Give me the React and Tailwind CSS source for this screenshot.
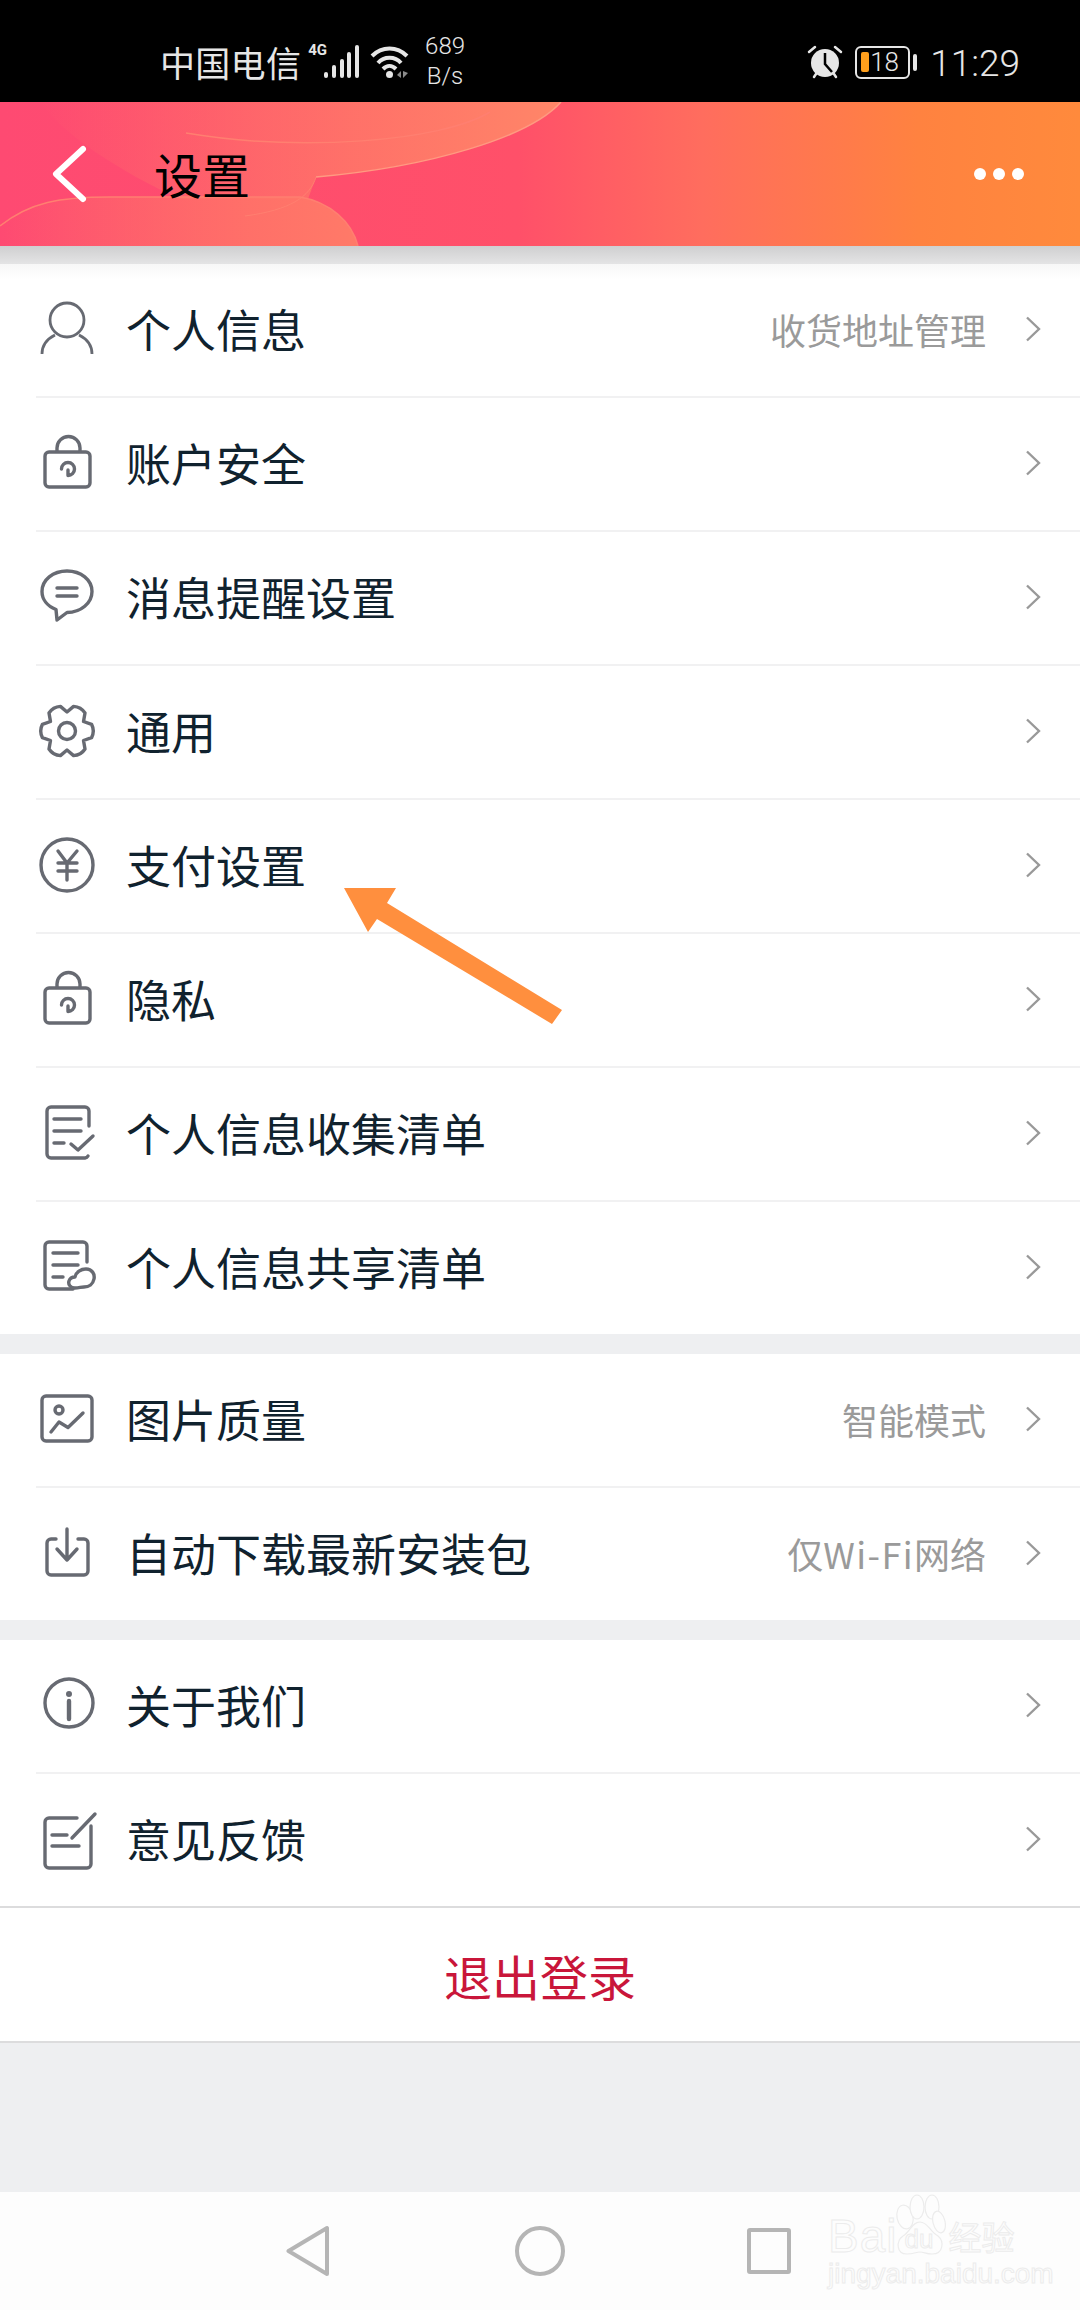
import { Fragment } from "react";

const cjk = { fontFamily: '"Noto Sans CJK SC", "Noto Sans", sans-serif' };

// six lobes, notch on top like the reference gear
const gearPath = (() => {
  let d = "";
  for (let k = 0; k < 6; k++) {
    const a = (k * Math.PI) / 3;
    const pt = (r, off) => {
      const t = a + (off * Math.PI) / 180;
      return `${(31 + r * Math.cos(t)).toFixed(1)} ${(31 + r * Math.sin(t)).toFixed(1)}`;
    };
    d += `${k === 0 ? "M" : "L"}${pt(19, -30)} L${pt(25.5, -15)} Q${pt(28, 0)} ${pt(25.5, 15)} L${pt(19, 30)} `;
  }
  return d + "Z";
})();

const Icon = ({ children }) => (
  <svg
    viewBox="0 0 62 62"
    className="w-[62px] h-[62px] shrink-0"
    fill="none"
    stroke="#676a72"
    strokeWidth="3.4"
    strokeLinecap="round"
    strokeLinejoin="round"
  >
    {children}
  </svg>
);

const UserIcon = () => (
  <Icon>
    <circle cx="31" cy="22" r="17" strokeWidth="2.8" />
    <path d="M6 56 C6 48 11 41 19 37 M56 56 C56 48 51 41 43 37" strokeWidth="2.8" strokeLinecap="butt" />
  </Icon>
);

const LockIcon = () => (
  <Icon>
    <rect x="9" y="20" width="45" height="35" rx="4" />
    <path d="M21 19 v-3 a11.5 11.5 0 0 1 23 0 v3" />
    <path d="M25.5 37 A6.5 6.5 0 1 1 32 43.5 V38" />
  </Icon>
);

const MessageIcon = () => (
  <Icon>
    <path d="M31 5 C17 5 6 14 6 25.5 C6 33 11 40 20 43.5 L21 54 L31 46.5 C45 46.5 56 37 56 25.5 C56 14 45 5 31 5 Z" />
    <path d="M21 22 H41 M21 30 H41" />
  </Icon>
);

const GearIcon = () => (
  <Icon>
    <path d={gearPath} />
    <circle cx="31" cy="31" r="8.5" />
  </Icon>
);

const YenIcon = () => (
  <Icon>
    <circle cx="31" cy="31" r="26" />
    <path d="M22 17 L31 29 L41 17 M22 29 H41 M22 37 H41 M31 29 V46" />
  </Icon>
);

const DocCheckIcon = () => (
  <Icon>
    <path d="M53 24 V9 a4 4 0 0 0 -4 -4 H15 a4 4 0 0 0 -4 4 V52 a4 4 0 0 0 4 4 H49 a4 4 0 0 0 3 -2" />
    <path d="M18 17 H45 M18 29 H45 M18 41 H28" />
    <path d="M35 42 L42 48 L57 34" />
  </Icon>
);

const DocCloudIcon = () => (
  <Icon>
    <path d="M51 26 V10 a4 4 0 0 0 -4 -4 H13 a4 4 0 0 0 -4 4 V49 a4 4 0 0 0 4 4 H37" />
    <path d="M17 17 H42 M17 29 H42 M17 41 H27" />
    <path d="M39 52 C34 52 32 48 33 45 C34 42 37 41 39 41 C40 36 45 33 50 33 C56 33 59 38 58 43 C57 48 53 51 48 51 C45 51 43 52 39 52 Z" />
  </Icon>
);

const ImageIcon = () => (
  <Icon>
    <rect x="6" y="8" width="50" height="45" rx="4" />
    <circle cx="23" cy="22" r="4" />
    <path d="M15 44 L23 34 L32 39.5 L47 25" />
  </Icon>
);

const DownloadIcon = () => (
  <Icon>
    <path d="M20 17 H15 a4 4 0 0 0 -4 4 V49 a4 4 0 0 0 4 4 H48 a4 4 0 0 0 4 -4 V21 a4 4 0 0 0 -4 -4 H42" />
    <path d="M31 7 V38 M21 27 L31 38 L41 27" />
  </Icon>
);

const InfoIcon = () => (
  <Icon>
    <circle cx="33" cy="29" r="24" />
    <path d="M33 27 V45" strokeWidth="4.4" />
    <circle cx="33" cy="20" r="1.6" strokeWidth="2.8" />
  </Icon>
);

const EditIcon = () => (
  <Icon>
    <path d="M41 10 H13 a4 4 0 0 0 -4 4 V56 a4 4 0 0 0 4 4 H51 a4 4 0 0 0 4 -4 V18" />
    <path d="M59 6 L36 30 M16 27 H31 M16 38 H43" />
  </Icon>
);

const Row = ({ icon, title, value }) => (
  <div className="ml-[36px] h-[132px] pr-[39px] pb-[2px] flex items-center">
    {icon}
    <span className="ml-[28px] text-[45px] text-[#10222e] whitespace-nowrap">{title}</span>
    {value && (
      <span className="ml-auto text-[36px] text-[#9a9a9a] whitespace-nowrap">{value}</span>
    )}
    <svg
      viewBox="0 0 16 26"
      className={`w-[16px] h-[26px] ${value ? "ml-[39px]" : "ml-auto"}`}
      fill="none"
      stroke="#999999"
      strokeWidth="2.4"
    >
      <path d="M2 1.5 L14 13 L2 24.5" />
    </svg>
  </div>
);

const Group = ({ rows, className }) => (
  <div className={`flex flex-col ${className || "bg-white"}`}>
    {rows.map((r, i) => (
      <Fragment key={r.title}>
        {i > 0 && <div className="ml-[36px] h-[2px] bg-[#f1f1f2]" />}
        <Row {...r} />
      </Fragment>
    ))}
  </div>
);

const StatusBar = () => (
  <div className="h-[102px] bg-black flex items-center pl-[160px] pr-[60px] pt-[22px] text-[#e6e6e6]">
    <span className="text-[35px] tracking-[0.3px] leading-none -mt-[2px]" style={cjk}>中国电信</span>
    <span className="ml-[7px] mb-[24px] text-[15px] font-bold leading-none font-['Roboto',sans-serif]">4G</span>
    <svg viewBox="0 0 36 34" className="w-[36px] h-[34px] -ml-[3px]" fill="#e6e6e6">
      <rect x="0" y="27" width="4" height="6" rx="2" />
      <rect x="8" y="20" width="4" height="13" rx="2" />
      <rect x="16" y="14" width="4" height="19" rx="2" />
      <rect x="23" y="7" width="4" height="26" rx="2" />
      <rect x="31" y="0" width="4" height="33" rx="2" />
    </svg>
    <svg viewBox="0 0 40 34" className="w-[40px] h-[34px] ml-[10px]" fill="none" stroke="#e6e6e6" strokeWidth="4">
      <path d="M2 11 C12 1 27 1 37 11" />
      <path d="M8 18 C14 11 25 11 31 18" />
      <path d="M13 24 C17 20 22 20 26 24" />
      <circle cx="19.5" cy="29.5" r="3.5" fill="#e6e6e6" stroke="none" />
      <path d="M27 30 L31 26 V33 Z M33 26 V33 L38 28 Z" fill="#8a8a8a" stroke="none" />
    </svg>
    <div className="ml-[14px] w-[42px] flex flex-col items-center text-[24px] leading-[30px] font-['Roboto',sans-serif] font-light -mt-[2px]">
      <span>689</span>
      <span>B/s</span>
    </div>
    <svg viewBox="0 0 36 34" className="ml-auto w-[36px] h-[34px]" fill="none" stroke="#e6e6e6">
      <circle cx="18" cy="18" r="14" fill="#e6e6e6" stroke="none" />
      <path d="M18 8 V19 L25 27" stroke="#000000" strokeWidth="2.5" />
      <path d="M2 7 L8 2 M34 7 L28 2 M7 32 L9 29 M29 32 L27 29" strokeWidth="2.5" strokeLinecap="round" />
    </svg>
    <div className="ml-[12px] w-[55px] h-[33px] border-[2px] border-[#e6e6e6] rounded-[6px] flex items-center pl-[4px]">
      <div className="w-[8px] h-[20px] rounded-[2px] bg-[#ff9f1c]" />
      <span className="ml-[1px] text-[26px] leading-none font-['Roboto',sans-serif] font-light">18</span>
    </div>
    <div className="ml-[3px] w-[4px] h-[17px] rounded-[2px] bg-[#e6e6e6]" />
    <span className="ml-[13px] mt-[3px] text-[37px] leading-none font-['Roboto',sans-serif] font-light">11:29</span>
  </div>
);

const Header = () => (
  <div className="relative h-[144px] flex items-center pl-[50px] pr-[56px] bg-[linear-gradient(90deg,#fe4a72_0%,#ff5069_48%,#ff6d5e_65%,#ff8240_85%,#ff8a3c_100%)] overflow-hidden">
    {/* background clouds */}
    <svg viewBox="0 0 1080 144" className="absolute inset-0 w-[1080px] h-[144px]" fill="none">
      <defs>
        <linearGradient id="cloudTop" x1="0" x2="1" y1="0" y2="0">
          <stop offset="0" stopColor="#ff7a68" stopOpacity="0" />
          <stop offset="0.6" stopColor="#ff7a68" stopOpacity="0.8" />
          <stop offset="1" stopColor="#ff8668" />
        </linearGradient>
        <linearGradient id="cloudLow" x1="0" x2="1" y1="0" y2="0">
          <stop offset="0" stopColor="#ff7a68" stopOpacity="0" />
          <stop offset="0.7" stopColor="#ff7468" stopOpacity="0.9" />
          <stop offset="1" stopColor="#ff7a68" />
        </linearGradient>
      </defs>
      <path d="M561 0 C530 35 430 65 316 75 L308 97 L180 97 C120 70 60 30 40 0 Z" fill="url(#cloudTop)" />
      <path d="M0 124 C30 100 60 95 110 95 L300 95 C330 100 352 120 358 144 L0 144 Z" fill="url(#cloudLow)" />
      <path d="M0 124 C30 100 60 95 110 95 L300 95 C330 100 352 120 358 144" stroke="#ff7f70" strokeWidth="1.5" />
      <path d="M561 0 C530 35 430 65 316 75" stroke="#ff9a80" strokeWidth="1.5" />
      <path d="M186 31 C300 50 440 40 490 10" stroke="#ff7f70" strokeWidth="1.5" />
      <path d="M316 75 C310 95 290 108 245 114" stroke="#ff7f70" strokeWidth="1" />
    </svg>
    <svg viewBox="0 0 38 60" className="relative w-[38px] h-[60px]" fill="none" stroke="#ffffff" strokeWidth="6" strokeLinecap="round" strokeLinejoin="round">
      <path d="M33 5 L6 30 L33 55" />
    </svg>
    <span className="relative ml-[66px] -mt-[3px] text-[48px] text-black" style={cjk}>设置</span>
    <div className="relative ml-auto flex gap-[7px]">
      <div className="w-[12px] h-[12px] rounded-full bg-white" />
      <div className="w-[12px] h-[12px] rounded-full bg-white" />
      <div className="w-[12px] h-[12px] rounded-full bg-white" />
    </div>
  </div>
);

const Watermark = () => (
  <div className="absolute left-[828px] top-[2px] w-[194px] flex flex-col text-transparent [-webkit-text-stroke:1px_#ececec]">
    <div className="h-[62px] flex items-end">
      <span className="text-[46px] leading-[40px] tracking-[1px] font-['Liberation_Sans',sans-serif]">Bai</span>
      <div className="relative w-[52px] h-[62px] -ml-[3px] shrink-0">
        <svg viewBox="0 0 52 62" className="w-[52px] h-[62px]" fill="#fdfdfd" stroke="#ececec" strokeWidth="1.2">
          <ellipse cx="11" cy="23" rx="8" ry="12" transform="rotate(-12 11 23)" />
          <ellipse cx="23" cy="13" rx="7" ry="12" />
          <ellipse cx="38" cy="13" rx="7" ry="12" />
          <ellipse cx="45" cy="28" rx="6" ry="11" transform="rotate(-14 45 28)" />
          <path d="M26 28 C34 28 36 38 44 42 C50 47 50 60 38 60 C32 60 30 58 26 58 C22 58 20 60 13 60 C2 60 2 47 9 42 C16 38 18 28 26 28 Z" />
        </svg>
        <span className="absolute left-[10px] bottom-[4px] text-[26px] leading-none font-['Liberation_Sans',sans-serif]">du</span>
      </div>
      <span className="ml-[2px] text-[33px] leading-[40px] whitespace-nowrap" style={cjk}>经验</span>
    </div>
    <span className="mt-[4px] text-[28px] leading-[28px] font-['Liberation_Sans',sans-serif] whitespace-nowrap">jingyan.baidu.com</span>
  </div>
);

const NavBar = () => (
  <div className="relative h-[118px] bg-[#fdfdfd] flex items-center pl-[286px]">
    <svg viewBox="0 0 44 52" className="w-[44px] h-[52px]" fill="none" stroke="#b5b5b5" strokeWidth="4" strokeLinejoin="round">
      <path d="M41 3 V49 L2.5 26 Z" />
    </svg>
    <div className="ml-[185px] w-[50px] h-[50px] rounded-full border-[4px] border-[#b5b5b5]" />
    <div className="ml-[182px] w-[44px] h-[46px] rounded-[3px] border-[4px] border-[#b5b5b5]" />
    <Watermark />
  </div>
);

const PointerArrow = () => (
  // annotation drawn over the list
  <svg viewBox="0 0 240 150" className="absolute left-[330px] top-[880px] w-[240px] h-[150px]">
    <polygon points="14,8 66,8 57,23 232,130 222,144 47,39 38,52" fill="#ff8f3e" />
  </svg>
);

export default function App() {
  return (
    <div className="relative w-[1080px] h-[2310px] bg-[#eeeff1] flex flex-col" style={cjk}>
      <StatusBar />
      <Header />
      <div className="h-[18px] shrink-0 bg-[linear-gradient(#cfcfd0,#e4e4e5)]" />
      <Group
        className="bg-[linear-gradient(#f7f7f7,#ffffff_16px)]"
        rows={[
          { icon: <UserIcon />, title: "个人信息", value: "收货地址管理" },
          { icon: <LockIcon />, title: "账户安全" },
          { icon: <MessageIcon />, title: "消息提醒设置" },
          { icon: <GearIcon />, title: "通用" },
          { icon: <YenIcon />, title: "支付设置" },
          { icon: <LockIcon />, title: "隐私" },
          { icon: <DocCheckIcon />, title: "个人信息收集清单" },
          { icon: <DocCloudIcon />, title: "个人信息共享清单" },
        ]}
      />
      <Group
        className="mt-[20px] bg-white"
        rows={[
          { icon: <ImageIcon />, title: "图片质量", value: "智能模式" },
          {
            icon: <DownloadIcon />,
            title: "自动下载最新安装包",
            value: (
              <>
                仅<span className="tracking-[1.4px]">Wi-Fi</span>网络
              </>
            ),
          },
        ]}
      />
      <Group
        className="mt-[20px] bg-white"
        rows={[
          { icon: <InfoIcon />, title: "关于我们" },
          { icon: <EditIcon />, title: "意见反馈" },
        ]}
      />
      <div className="h-[137px] shrink-0 flex items-center justify-center bg-white border-y-[2px] border-[#dcdcdd] text-[48px] text-[#c9163a]">
        退出登录
      </div>
      <div className="flex-1" />
      <NavBar />
      <PointerArrow />
    </div>
  );
}
